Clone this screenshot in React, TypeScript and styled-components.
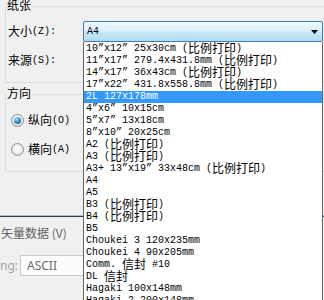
import React from 'react';
import styled, { createGlobalStyle } from 'styled-components';

const GlobalStyle = createGlobalStyle`
  html, body { margin: 0; padding: 0; background: #f0f0f0; }
  #root { width: 324px; height: 300px; overflow: hidden; }
`;

const Page = styled.div`
  position: relative;
  width: 324px;
  height: 300px;
  overflow: hidden;
  background: #f0f0f0;
  font-family: "Liberation Mono", "Noto Sans CJK SC", monospace;
  font-size: 10px;
  line-height: 12px;
  color: #000;
`;

const Cjk = styled.span`
  font-family: "Noto Sans CJK SC", sans-serif;
  font-size: 12px;
  line-height: 0;
  vertical-align: -2px;
`;

const CJK_RE = /([\u2e80-\u9fff\uff00-\uffef]+)/;

function Mixed({ text }: { text: string }) {
  return (
    <>
      {text.split(CJK_RE).map((part, i) =>
        i % 2 === 1 ? <Cjk key={i}>{part}</Cjk> : <React.Fragment key={i}>{part}</React.Fragment>
      )}
    </>
  );
}

const Group = styled.fieldset<{ $top: number; $padTop: number; $padBottom: number }>`
  box-sizing: border-box;
  width: 340px;
  min-width: 0;
  margin: ${(p) => p.$top}px 0 0 5px;
  padding: ${(p) => p.$padTop}px 0 ${(p) => p.$padBottom}px 2px;
  border: 1px solid #d5dfe5;
`;

const Legend = styled.legend`
  margin-left: -2px;
  padding: 0 1px;
  height: 12px;
  line-height: 12px;
`;

const Fields = styled.div`
  display: flex;
  flex-direction: column;
  gap: 8px;
`;

const FieldRow = styled.div`
  display: flex;
  align-items: center;
  height: 21px;
`;

const FieldLabel = styled.div`
  width: 75px;
  white-space: nowrap;
`;

const ComboWrap = styled.div`
  position: relative;
  width: 240px;
  height: 21px;
`;

const Combo = styled.div<{ $hot?: boolean }>`
  box-sizing: border-box;
  display: flex;
  align-items: center;
  width: 240px;
  height: 21px;
  padding: 0 4px 0 3px;
  border: 1px solid ${(p) => (p.$hot ? '#3c7fb1' : '#707070')};
  border-radius: 2px;
  background: ${(p) =>
    p.$hot
      ? 'linear-gradient(#eef8fd 0%, #dcf0fb 45%, #c6e6f8 55%, #b0dbf3 100%)'
      : 'linear-gradient(#f2f2f2 0%, #ebebeb 50%, #dddddd 50%, #cfcfcf 100%)'};
`;

const ComboText = styled.span`
  flex: 1;
`;

const DropList = styled.div`
  position: absolute;
  left: 0;
  top: 100%;
  z-index: 5;
  box-sizing: border-box;
  width: 240px;
  height: 280px;
  padding-top: 1px;
  background: #fff;
  border: 1px solid #646464;
  border-top: none;
`;

const Item = styled.div<{ $selected?: boolean }>`
  height: 12px;
  padding-left: 2px;
  white-space: nowrap;
  background: ${(p) => (p.$selected ? '#3399ff' : 'transparent')};
  color: ${(p) => (p.$selected ? '#fff' : '#000')};
`;

const RadioList = styled.div`
  display: flex;
  flex-direction: column;
  gap: 16px;
`;

const RadioRow = styled.label`
  display: flex;
  align-items: center;
  gap: 4px;
  height: 13px;
  margin-left: 3px;
  white-space: nowrap;
`;

const RadioDot = styled.span<{ $checked?: boolean }>`
  position: relative;
  box-sizing: border-box;
  width: 13px;
  height: 13px;
  border-radius: 50%;
  border: 1px solid #8e8f8f;
  background: radial-gradient(circle at 50% 40%, #ffffff 0%, #f0f0f0 45%, #cfcfcf 100%);
  &::after {
    content: '';
    display: ${(p) => (p.$checked ? 'block' : 'none')};
    position: absolute;
    left: 2px;
    top: 2px;
    width: 7px;
    height: 7px;
    border-radius: 50%;
    background: radial-gradient(circle at 35% 30%, #b6e4fb 0%, #4aa6e0 35%, #1c5f9c 80%, #164f86 100%);
  }
`;

const Separator = styled.div`
  margin-top: 43px;
  height: 0;
  border-top: 1px solid #9fc3dc;
  border-bottom: 1px solid #3d3d3d;
`;

const CheckLabel = styled.div`
  margin-top: 10px;
  padding-left: 1px;
  font-family: "Noto Sans CJK SC", sans-serif;
  font-size: 12px;
  line-height: 12px;
  color: #606060;
  white-space: nowrap;
`;

const InputRow = styled.div`
  display: flex;
  align-items: center;
  gap: 3px;
  margin-top: 16px;
`;

const InputLabel = styled.div`
  width: 17px;
  text-align: right;
  font-family: "Noto Sans", sans-serif;
  font-size: 12px;
  color: #a3a3a3;
`;

const TextBox = styled.div`
  box-sizing: border-box;
  width: 120px;
  height: 21px;
  padding-left: 6px;
  border: 1px solid #c9c9c9;
  background: #fcfcfc;
  font-family: "Noto Sans", sans-serif;
  font-size: 12px;
  line-height: 19px;
  color: #6d6d6d;
`;

const items = [
  '10”x12” 25x30cm (比例打印)',
  '11”x17” 279.4x431.8mm (比例打印)',
  '14”x17” 36x43cm (比例打印)',
  '17”x22” 431.8x558.8mm (比例打印)',
  '2L 127x178mm',
  '4”x6” 10x15cm',
  '5”x7” 13x18cm',
  '8”x10” 20x25cm',
  'A2 (比例打印)',
  'A3 (比例打印)',
  'A3+ 13”x19” 33x48cm (比例打印)',
  'A4',
  'A5',
  'B3 (比例打印)',
  'B4 (比例打印)',
  'B5',
  'Choukei 3 120x235mm',
  'Choukei 4 90x205mm',
  'Comm. 信封 #10',
  'DL 信封',
  'Hagaki 100x148mm',
  'Hagaki 2 200x148mm',
];

const SELECTED = 4;

function Arrow() {
  return (
    <svg width="7" height="4" viewBox="0 0 7 4">
      <path d="M0 0H7L3.5 4Z" fill="#000" />
    </svg>
  );
}

export default function App() {
  return (
    <Page>
      <GlobalStyle />
      <Group $top={0} $padTop={9} $padBottom={11}>
        <Legend>
          <Mixed text="纸张" />
        </Legend>
        <Fields>
          <FieldRow>
            <FieldLabel>
              <Mixed text="大小(Z):" />
            </FieldLabel>
            <ComboWrap>
              <Combo $hot>
                <ComboText>A4</ComboText>
                <Arrow />
              </Combo>
              <DropList>
                {items.map((t, i) => (
                  <Item key={t} $selected={i === SELECTED}>
                    <Mixed text={t} />
                  </Item>
                ))}
              </DropList>
            </ComboWrap>
          </FieldRow>
          <FieldRow>
            <FieldLabel>
              <Mixed text="来源(S):" />
            </FieldLabel>
            <Combo>
              <ComboText />
              <Arrow />
            </Combo>
          </FieldRow>
        </Fields>
      </Group>
      <Group $top={5} $padTop={14} $padBottom={15}>
        <Legend>
          <Mixed text="方向" />
        </Legend>
        <RadioList>
          <RadioRow>
            <RadioDot $checked />
            <span>
              <Mixed text="纵向(O)" />
            </span>
          </RadioRow>
          <RadioRow>
            <RadioDot />
            <span>
              <Mixed text="横向(A)" />
            </span>
          </RadioRow>
        </RadioList>
      </Group>
      <Separator />
      <CheckLabel>矢量数据 (V)</CheckLabel>
      <InputRow>
        <InputLabel>ng:</InputLabel>
        <TextBox>ASCII</TextBox>
      </InputRow>
    </Page>
  );
}
